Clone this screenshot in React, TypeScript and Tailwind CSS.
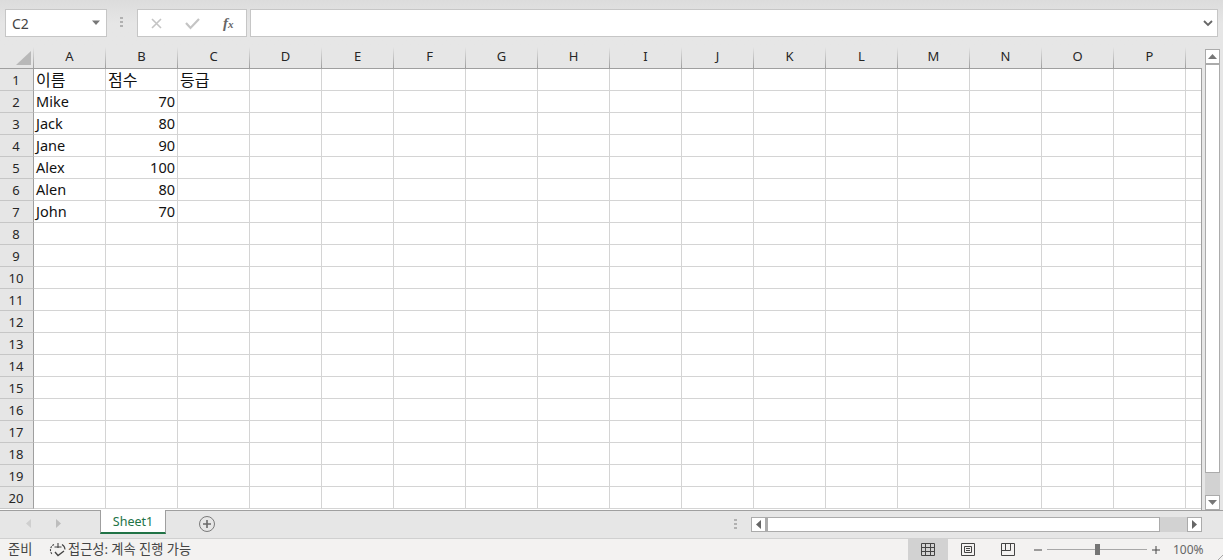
const FONT = { fontFamily: '"Noto Sans","Noto Sans CJK KR",sans-serif' };
const cols = ['A','B','C','D','E','F','G','H','I','J','K','L','M','N','O','P'];
const rows = Array.from({ length: 20 }, (_, i) => i + 1);
const data: Record<number, [string, string, string]> = {
  1: ['이름', '점수', '등급'],
  2: ['Mike', '70', ''],
  3: ['Jack', '80', ''],
  4: ['Jane', '90', ''],
  5: ['Alex', '100', ''],
  6: ['Alen', '80', ''],
  7: ['John', '70', ''],
};

function Row({ n }: { n: number }) {
  const d = data[n];
  return (
    <div className="flex h-[22px] shrink-0">
      <div className="w-[34px] shrink-0 h-[22px] bg-[#e6e6e6] border-r border-r-[#9f9f9f] border-b border-b-[#c6c6c6] text-center text-[13px] leading-[22px] text-[#262626] pr-[1px]">{n}</div>
      {cols.map((c, i) => (
        <div key={c} className={`w-[72px] shrink-0 h-[22px] border-r border-b border-[#d4d4d4] text-[#111] overflow-visible whitespace-nowrap ${n === 1 ? 'text-[16px] leading-[22px]' : 'text-[14.5px] leading-[20px]'} ${i === 1 && n > 1 ? 'text-right pr-[2px]' : 'pl-[2px]'}`}>
          {d && i < 3 ? d[i] : ''}
        </div>
      ))}
      <div className="w-[15px] shrink-0 h-[22px] border-b border-[#d4d4d4]" />
    </div>
  );
}

function Dots() {
  return <svg width="3" height="11" viewBox="0 0 3 11"><path d="M0 0h3v2H0zM0 4h3v2H0zM0 8h3v2H0z" fill="#b1b1b1" /></svg>;
}

export default function App() {
  return (
    <div style={FONT} className="relative w-[1223px] h-[560px] flex flex-col overflow-hidden bg-[#e6e6e6]">
      <div className="h-[47px] shrink-0 flex items-start pt-[9px] pl-[5px] bg-gradient-to-b from-[#dcdcdc] via-[#e6e6e6] to-[#e6e6e6]">
        <div className="w-[102px] h-[28px] bg-white border border-[#c6c6c6] flex items-center justify-between pl-[6px] pr-[5px] text-[14px] text-[#444]">
          <span>C2</span>
          <svg width="10" height="6" viewBox="0 0 10 6"><path d="M1 0.5h8L5 5z" fill="#777" /></svg>
        </div>
        <div className="w-[30px] flex justify-center pt-[8px] pr-[1px]"><Dots /></div>
        <div className="w-[110px] h-[28px] bg-white border border-[#c6c6c6] flex items-center pl-[12px]">
          <svg width="13" height="13" viewBox="0 0 13 13" className="mr-[22px]"><path d="M2 2l9 9M11 2l-9 9" stroke="#c4c4c4" strokeWidth="1.6" fill="none" /></svg>
          <svg width="15" height="13" viewBox="0 0 15 13" className="mr-[23px]"><path d="M1 6l4.5 5L14 2" stroke="#c4c4c4" strokeWidth="2.2" fill="none" /></svg>
          <span className="text-[15px] text-[#666] italic font-bold leading-none" style={{ fontFamily: '"Liberation Serif",serif' }}>f<span className="text-[11px]">x</span></span>
        </div>
        <div className="w-[3px]" />
        <div className="w-[968px] h-[28px] bg-white border border-[#c6c6c6] flex items-center justify-end pr-[4px]">
          <svg width="10" height="7" viewBox="0 0 10 7"><path d="M1 1l4 4 4-4" stroke="#666" strokeWidth="1.8" fill="none" /></svg>
        </div>
      </div>

      <div className="flex-1 min-h-0 flex">
        <div className="w-[1202px] shrink-0 flex flex-col overflow-hidden">
          <div className="flex h-[22px] shrink-0 border-b border-[#9f9f9f]">
            <div className="relative w-[34px] shrink-0 flex justify-end">
              <svg width="15" height="14" viewBox="0 0 15 14" className="absolute left-[16px] bottom-[3px]"><path d="M15 0v14H0z" fill="#b8b8b8" /></svg>
              <div className="w-px h-full bg-gradient-to-b from-[#e6e6e6] to-[#9f9f9f]" />
            </div>
            {cols.map((c) => (
              <div key={c} className="w-[72px] shrink-0 flex">
                <div className="flex-1 text-center text-[13px] leading-[18px] text-[#262626]">{c}</div>
                <div className="w-px h-full bg-gradient-to-b from-[#e6e6e6] to-[#9f9f9f]" />
              </div>
            ))}
            <div className="w-[16px] shrink-0" />
          </div>
          <div className="flex-1 min-h-0 bg-white border-r border-[#9f9f9f] overflow-hidden">
            {rows.map((n) => <Row key={n} n={n} />)}
          </div>
        </div>
        <div className="flex-1 flex flex-col pl-[3px] pt-[2px]">
          <div className="w-[15px] flex-1 flex flex-col bg-[#d2d2d2]">
            <div className="h-[15px] shrink-0 bg-white border border-[#ababab] flex items-center justify-center">
              <svg width="9" height="5" viewBox="0 0 9 5"><path d="M4.5 0L9 5H0z" fill="#777" /></svg>
            </div>
            <div className="h-[410px] shrink-0 bg-white border-x border-b border-[#ababab] border-t-2 border-t-[#ababab] -mt-px" />
            <div className="flex-1" />
            <div className="h-[15px] shrink-0 bg-white border border-[#ababab] flex items-center justify-center">
              <svg width="9" height="5" viewBox="0 0 9 5"><path d="M0 0h9L4.5 5z" fill="#777" /></svg>
            </div>
          </div>
        </div>
      </div>

      <div className="h-[28px] shrink-0 border-t border-[#9f9f9f] flex items-start">
        <div className="w-[100px] flex items-center pl-[26px] pt-[8px] gap-[23px] shrink-0">
          <svg width="6" height="9" viewBox="0 0 6 9"><path d="M5 0v9L0 4.5z" fill="#cfcfcf" /></svg>
          <svg width="6" height="9" viewBox="0 0 6 9"><path d="M1 0v9l5-4.5z" fill="#bdbdbd" /></svg>
        </div>
        <div className="w-[66px] h-[24px] -mt-px bg-white border-x border-[#9f9f9f] border-b-2 border-b-[#217346] text-center text-[12.5px] leading-[24px] text-[#217346] shrink-0">Sheet1</div>
        <div className="ml-[33px] mt-[5px] w-[16px] h-[16px] rounded-full border-[1.5px] border-[#7a7a7a] flex items-center justify-center shrink-0">
          <svg width="10" height="10" viewBox="0 0 10 10"><path d="M5 1v8M1 5h8" stroke="#6a6a6a" strokeWidth="1.6" /></svg>
        </div>
        <div className="ml-[519px] mt-[8px] shrink-0 flex"><Dots /></div>
        <div className="ml-[14px] mt-[6px] w-[451px] h-[15px] flex shrink-0 bg-[#d2d2d2]">
          <div className="w-[15px] bg-white border border-[#ababab] flex items-center justify-center shrink-0">
            <svg width="5" height="9" viewBox="0 0 5 9"><path d="M5 0v9L0 4.5z" fill="#666" /></svg>
          </div>
          <div className="w-[394px] bg-white border-y border-r border-[#ababab] border-l-2 border-l-[#ababab]" />
          <div className="flex-1" />
          <div className="w-[15px] bg-white border border-[#ababab] flex items-center justify-center shrink-0">
            <svg width="5" height="9" viewBox="0 0 5 9"><path d="M0 0v9l5-4.5z" fill="#666" /></svg>
          </div>
        </div>
      </div>

      <div className="h-[22px] shrink-0 bg-[#f3f2f1] border-t border-[#d0d0d0] flex items-center text-[13.2px] text-[#444]">
        <span className="ml-[8px] w-[41px] shrink-0">준비</span>
        <svg width="18" height="16" viewBox="0 0 18 16" className="shrink-0" fill="none" stroke="#444" strokeWidth="1.1">
          <path d="M5 2.5A6 6 0 0 0 3 12" strokeDasharray="2 1" />
          <path d="M9 1v5M5.5 5h7" />
          <path d="M13 2.5a6 6 0 0 1 3 5" />
          <path d="M6 10l3 3.5L15 9" strokeWidth="1.3" />
        </svg>
        <span className="ml-[1px] shrink-0 whitespace-nowrap w-[122px]">접근성: 계속 진행 가능</span>
        <div className="ml-[718px] w-[40px] h-[21px] bg-[#d2d2d2] flex items-center justify-center pr-[1px] shrink-0">
          <svg width="14" height="13" viewBox="0 0 14 13" fill="none" stroke="#444"><path d="M.5.5h13v12H.5zM.5 4.5h13M.5 8.5h13M4.5.5v12M9.5.5v12" /></svg>
        </div>
        <div className="w-[40px] flex justify-center shrink-0">
          <svg width="14" height="13" viewBox="0 0 14 13" fill="none" stroke="#444"><path d="M.5.5h13v12H.5zM3.5 3.5h7v6h-7zM5 5.5h4M5 7.5h4" /></svg>
        </div>
        <div className="w-[40px] flex justify-center shrink-0">
          <svg width="14" height="13" viewBox="0 0 14 13" fill="none" stroke="#444"><path d="M.5 12.5V.5h13v12zM.5 7.5h9V.5M4.5 7.5V.5" /></svg>
        </div>
        <svg width="8" height="8" viewBox="0 0 8 8" className="ml-[6px] shrink-0"><path d="M0 4h8" stroke="#444" /></svg>
        <div className="relative w-[100px] h-[1px] bg-[#a8a8a8] ml-[5px] shrink-0">
          <div className="absolute left-[48px] -top-[5px] w-[5px] h-[11px] bg-[#757575]" />
        </div>
        <svg width="8" height="8" viewBox="0 0 8 8" className="ml-[5px] shrink-0"><path d="M0 4h8M4 0v8" stroke="#444" /></svg>
        <span className="ml-[13px] shrink-0 text-[12px] text-[#666]">100%</span>
      </div>
      <svg width="5" height="5" viewBox="0 0 5 5" className="absolute right-0 bottom-0"><path d="M0 5L5 0" stroke="#a8a8a8" /></svg>
    </div>
  );
}
